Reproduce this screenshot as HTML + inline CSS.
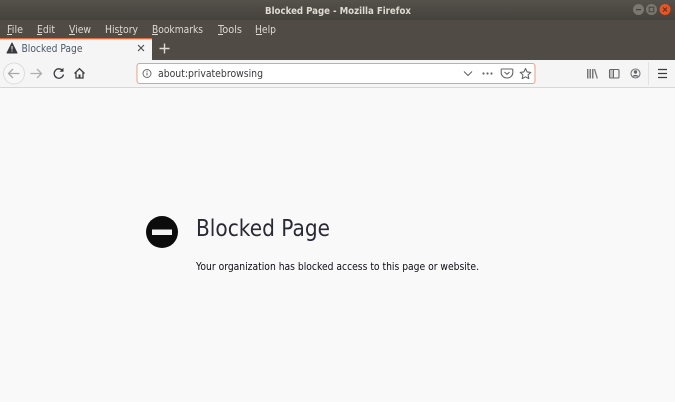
<!DOCTYPE html>
<html><head><meta charset="utf-8"><title>Blocked Page - Mozilla Firefox</title>
<style>
html,body{margin:0;padding:0;width:675px;height:402px;overflow:hidden;background:#f9f9fa}
svg{display:block}
text{font-family:"DejaVu Sans","Liberation Sans",sans-serif}
</style></head><body>
<svg width="675" height="402" viewBox="0 0 675 402" xmlns="http://www.w3.org/2000/svg">
<defs><linearGradient id="t" x1="0" y1="0" x2="0" y2="1"><stop offset="0" stop-color="#55524c"/><stop offset="1" stop-color="#45423d"/></linearGradient></defs>
<rect width="675" height="402" fill="#f9f9fa"/>
<rect width="675" height="20" fill="url(#t)"/>
<rect y="20" width="675" height="40" fill="#504c45"/>
<text x="265" y="14" font-size="10" font-weight="bold" fill="#dfdbd2" textLength="146" lengthAdjust="spacingAndGlyphs">Blocked Page - Mozilla Firefox</text>
<circle cx="638.5" cy="9.5" r="5.5" fill="#7a7770"/><rect x="636" y="9" width="5" height="1.2" fill="#45423d"/>
<circle cx="651.5" cy="9.5" r="5.5" fill="#7a7770"/><rect x="649.2" y="7.2" width="4.6" height="4.6" fill="none" stroke="#45423d"/>
<circle cx="665" cy="9.5" r="5.5" fill="#e95420"/><path d="M663 7.5l4 4m0-4l-4 4" stroke="#5a3020" stroke-width="1"/>
<g font-size="10.5" fill="#dfdbd2">
<text x="7" y="33" textLength="16" lengthAdjust="spacingAndGlyphs">File</text>
<text x="37" y="33" textLength="18" lengthAdjust="spacingAndGlyphs">Edit</text>
<text x="69" y="33" textLength="22" lengthAdjust="spacingAndGlyphs">View</text>
<text x="105" y="33" textLength="33" lengthAdjust="spacingAndGlyphs">History</text>
<text x="152" y="33" textLength="51" lengthAdjust="spacingAndGlyphs">Bookmarks</text>
<text x="218" y="33" textLength="24" lengthAdjust="spacingAndGlyphs">Tools</text>
<text x="255" y="33" textLength="21" lengthAdjust="spacingAndGlyphs">Help</text>
</g>
<g fill="#dfdbd2">
<rect x="7" y="34" width="5" height="1"/><rect x="37" y="34" width="5" height="1"/><rect x="69" y="34" width="6" height="1"/><rect x="118" y="34" width="4" height="1"/><rect x="152" y="34" width="6" height="1"/><rect x="218" y="34" width="5" height="1"/><rect x="256" y="34" width="6" height="1"/>
</g>
<rect y="38" width="152" height="22" fill="#f5f5f5"/>
<rect y="38" width="152" height="1.3" fill="#e9683a"/>
<path d="M12 43l5 10h-10z" fill="#38383d" stroke="#38383d" stroke-linejoin="round"/><rect x="11.5" y="46" width="1" height="3.6" fill="#f5f5f5"/><rect x="11.5" y="50.5" width="1" height="1" fill="#f5f5f5"/>
<text x="21.500" y="52" font-size="10.500" fill="#4a5a6a" textLength="61" lengthAdjust="spacingAndGlyphs">Blocked Page</text>
<path d="M138 45l6 6m0-6l-6 6" stroke="#4a4a4f" stroke-width="1.100" fill="none"/>
<path d="M164.500 43.500v10m-5-5h10" stroke="#dfdbd2" stroke-width="1.400" fill="none"/>
<rect y="60" width="675" height="27" fill="#f5f5f5"/>
<rect y="87" width="675" height="1" fill="#d7d7d7"/>
<circle cx="14" cy="73.500" r="10.500" fill="#f7f7f7" stroke="#dcdcdc"/>
<path d="M19.500 73.500h-11m4.500-4.500l-4.500 4.500l4.500 4.500" stroke="#a8a8aa" stroke-width="1.300" fill="none"/>
<path d="M30.500 73.500h11m-4.500-4.500l4.500 4.500l-4.500 4.500" stroke="#aeaeb0" stroke-width="1.300" fill="none"/>
<path d="M62.500 70.500a4.700 4.700 0 1 0 1 4" stroke="#3c3c40" stroke-width="1.300" fill="none"/><path d="M63.500 67.800v4h-4z" fill="#3c3c40"/>
<path d="M74.500 73.500l5-4.800l5 4.800m-8.500-1v5.500h7v-5.500" stroke="#3c3c40" stroke-width="1.300" fill="none"/><rect x="78.500" y="74.500" width="2" height="3.500" fill="#3c3c40"/>
<rect x="137" y="63.500" width="398" height="20" rx="2.500" fill="#fff" stroke="#e9a080"/>
<circle cx="147" cy="73.500" r="4" fill="none" stroke="#6a6a6e" stroke-width="1"/><rect x="146.500" y="72.500" width="1" height="3" fill="#6a6a6e"/><rect x="146.500" y="70.800" width="1" height="1" fill="#6a6a6e"/>
<text x="158" y="77" font-size="10.500" fill="#3a3a3e" textLength="105" lengthAdjust="spacingAndGlyphs">about:privatebrowsing</text>
<path d="M464 71.500l4 4l4-4" stroke="#66666a" stroke-width="1.100" fill="none"/>
<g fill="#66666a"><circle cx="483.500" cy="73.500" r="1.100"/><circle cx="487.500" cy="73.500" r="1.100"/><circle cx="491.500" cy="73.500" r="1.100"/></g>
<path d="M502 69h10a.8.800 0 0 1 .8.800v3a5.800 5.200 0 0 1-11.600 0v-3a.8.800 0 0 1 .8-.8z" stroke="#66666a" stroke-width="1.100" fill="none"/><path d="M504.500 72l2.500 2.300l2.500-2.300" stroke="#66666a" stroke-width="1.100" fill="none"/>
<path d="M525.500 68.500l1.600 3.400l3.700.5l-2.700 2.500l.7 3.700l-3.300-1.800l-3.300 1.800l.7-3.700l-2.700-2.500l3.700-.5z" stroke="#66666a" stroke-width="1.100" fill="none" stroke-linejoin="round"/>
<g fill="#77777a"><rect x="587" y="69" width="1.500" height="9.500"/><rect x="589.500" y="69" width="1.500" height="9.500"/><rect x="592" y="69" width="1.500" height="9.500"/></g>
<path d="M594.500 69l2.800 9.500" stroke="#77777a" stroke-width="1.300"/>
<rect x="609.500" y="69.500" width="9.500" height="8.500" rx="1" fill="none" stroke="#66666a" stroke-width="1.100"/><rect x="609.500" y="69.500" width="4" height="8.500" fill="#77777a" opacity=".4"/><path d="M613.500 69.500v8.500" stroke="#66666a"/>
<circle cx="635.500" cy="73.500" r="4.500" fill="none" stroke="#77777a" stroke-width="1.100"/><circle cx="635.500" cy="72" r="1.700" fill="#66666a"/><path d="M632.500 76.500a3.200 2.500 0 0 1 6 0z" fill="#66666a"/>
<rect x="648" y="62" width="1" height="23" fill="#e2e2e2"/>
<path d="M658 69.500h9m-9 4h9m-9 4h9" stroke="#3c3c40" stroke-width="1.200" fill="none"/>
<circle cx="162" cy="232" r="16" fill="#0c0c0d"/>
<rect x="152" y="229.500" width="20" height="5.500" fill="#f4f4f4"/>
<text x="196" y="236" font-size="23" fill="#2a2a34" font-family="Liberation Sans" textLength="134" lengthAdjust="spacingAndGlyphs">Blocked Page</text>
<text x="196" y="270" font-size="11" fill="#0c0c14" textLength="283" lengthAdjust="spacingAndGlyphs">Your organization has blocked access to this page or website.</text>
</svg>
</body></html>
